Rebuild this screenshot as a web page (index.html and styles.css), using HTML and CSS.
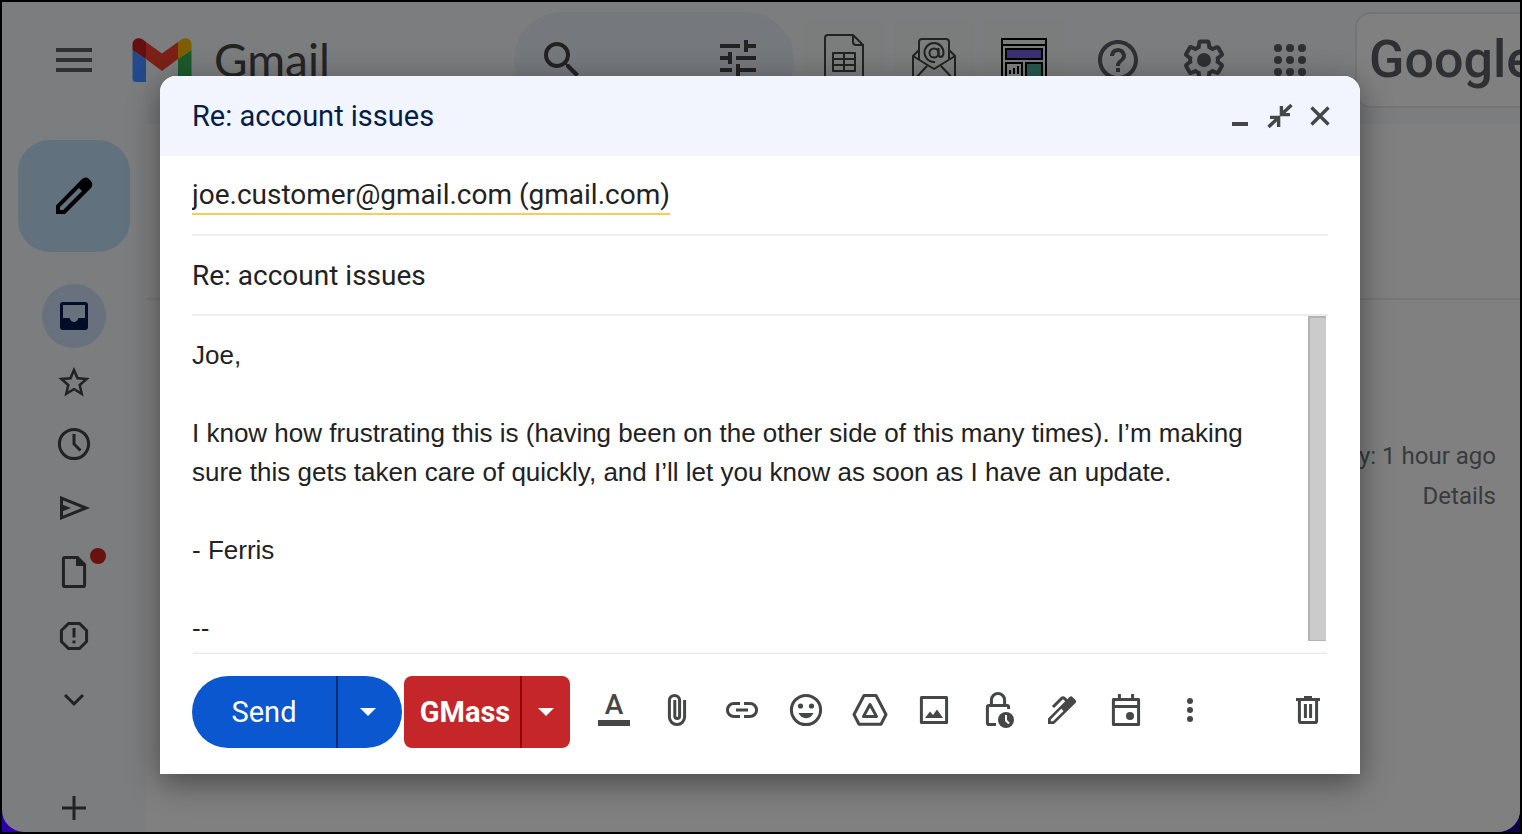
FILE: index.html
```html
<!DOCTYPE html>
<html lang="en">
<head>
<meta charset="utf-8">
<title>Gmail</title>
<link rel="stylesheet" href="styles.css">
</head>
<body>
<div class="desktop">
<div class="window">
  <header class="topbar">
    <button class="icon-btn" aria-label="Main menu"><svg width="48" height="48" viewBox="0 0 48 48"><path d="M6 12h36v4H6zM6 22h36v4H6zM6 32h36v4H6z"/></svg></button>
    <a class="brand" href="#">
      <svg width="60" height="44" viewBox="0 0 60 44" aria-hidden="true">
        <path fill="#224a8c" d="M.5 12L14 21V44H4.500Q.5 44 .5 40z"/>
        <path fill="#1b5a2c" d="M59.500 12L46 21V44H55.500Q59.500 44 59.500 40z"/>
        <path fill="#7c2018" d="M14 4L30 15.500L46 4V21L30 33L14 21z"/>
        <path fill="#641010" d="M.5 12V6.500C.5 1 6-1.500 10.500 1.300L14 4V21z"/>
        <path fill="#7d5d00" d="M59.500 12V6.500C59.500 1 54-1.500 49.500 1.300L46 4V21z"/>
      </svg>
      <span class="brand-name">Gmail</span>
    </a>
    <div class="search">
      <button class="icon-btn dark" aria-label="Search"><svg width="48" height="48" viewBox="0 0 24 24"><path d="M15.500 14h-.79l-.28-.27A6.471 6.471 0 0 0 16 9.500 6.500 6.500 0 1 0 9.500 16c1.610 0 3.090-.59 4.230-1.570l.27.28v.79l5 4.990L20.490 19l-4.990-5zm-6 0C7.010 14 5 11.990 5 9.500S7.010 5 9.500 5 14 7.010 14 9.500 11.990 14 9.500 14z"/></svg></button>
      <button class="icon-btn dark" aria-label="Search options"><svg width="48" height="48" viewBox="0 1 24 24"><path d="M3 17v2h6v-2H3zM3 5v2h10V5H3zm10 16v-2h8v-2h-8v-2h-2v6h2zM7 9v2H3v2h4v2h2V9H7zm14 4v-2H11v2h10zm-6-4h2V7h4V5h-4V3h-2v6z"/></svg></button>
    </div>
    <div class="extensions">
      <button class="ext" aria-label="Sheets campaign"><svg class="line" width="40" height="52" viewBox="0 0 40 52"><path d="M4 1h25l10 10v37q0 3-3 3H4q-3 0-3-3V4q0-3 3-3zM29 1v7q0 3 3 3h7M9 19h22v18H9zM9 25h22M9 31h22M20 19v18"/></svg></button>
      <button class="ext" aria-label="Mail campaign"><svg class="line" width="48" height="48" viewBox="0 0 48 48"><path d="M9 24V6q0-3 3-3h24q3 0 3 3v18M9 14l-6 6v24q0 2 2 2h38q2 0 2-2V20l-6-6M3 20l21 13L45 20M3 45l14-15M45 45L31 30"/><circle cx="24" cy="17" r="4.500"/><path d="M28.500 12v6q0 3 2.500 3 2.500-1 2.500-4a9.500 9.500 0 1 0-8.500 9"/></svg></button>
      <button class="ext" aria-label="Dashboard"><svg width="48" height="48" viewBox="0 0 48 48"><path fill="none" stroke="#000" stroke-width="2" d="M2 3h44v44H2zM2 9h44"/><path fill="#3c3070" stroke="#000" stroke-width="2" d="M6 13h36v10H6z"/><path fill="#808080" stroke="#000" stroke-width="2" d="M6 27h16v14H6z"/><path fill="#265852" stroke="#000" stroke-width="2" d="M26 27h16v14H26z"/><path stroke="#000" stroke-width="2" d="M10 38v-4M14 38v-6M18 38v-8"/></svg></button>
    </div>
    <div class="system">
      <button class="icon-btn" aria-label="Support"><svg width="48" height="48" viewBox="0 0 24 24"><path d="M11 18h2v-2h-2v2zm1-16C6.480 2 2 6.480 2 12s4.480 10 10 10 10-4.480 10-10S17.520 2 12 2zm0 18c-4.410 0-8-3.590-8-8s3.590-8 8-8 8 3.590 8 8-3.590 8-8 8zm0-14c-2.210 0-4 1.790-4 4h2c0-1.100.9-2 2-2s2 .9 2 2c0 2-3 1.750-3 5h2c0-2.250 3-2.500 3-5 0-2.210-1.790-4-4-4z"/></svg></button>
      <button class="icon-btn" aria-label="Settings"><svg width="48" height="48" viewBox="0 0 24 24"><path d="M13.850 22.250h-3.700c-.74 0-1.360-.54-1.450-1.270l-.27-1.890c-.27-.14-.53-.29-.79-.46l-1.800.72c-.7.260-1.470-.03-1.810-.65L2.200 15.530c-.35-.66-.2-1.440.36-1.880l1.530-1.190c-.01-.15-.02-.3-.02-.46 0-.15.010-.31.020-.46l-1.520-1.190c-.59-.45-.74-1.260-.37-1.880l1.850-3.190c.34-.62 1.110-.9 1.790-.63l1.810.73c.26-.17.52-.32.78-.46l.27-1.910c.09-.7.71-1.250 1.440-1.250h3.700c.74 0 1.360.54 1.450 1.270l.27 1.890c.27.14.53.29.79.46l1.800-.72c.71-.26 1.480.03 1.820.65l1.840 3.180c.36.66.2 1.440-.36 1.880l-1.520 1.190c.01.15.02.3.02.46s-.01.31-.02.46l1.520 1.190c.56.45.72 1.230.37 1.860l-1.860 3.220c-.34.62-1.110.9-1.800.63l-1.800-.72c-.26.17-.52.32-.78.460l-.27 1.910c-.1.680-.72 1.220-1.460 1.220zm-3.230-2h2.760l.37-2.550.53-.22c.44-.18.88-.44 1.340-.78l.45-.34 2.380.96 1.380-2.400-2.030-1.580.07-.56c.03-.26.060-.51.060-.78s-.03-.53-.06-.78l-.07-.56 2.030-1.580-1.390-2.400-2.390.96-.45-.35c-.42-.32-.87-.58-1.330-.77l-.52-.22-.37-2.550h-2.760l-.37 2.550-.53.210c-.44.190-.88.440-1.340.79l-.45.330-2.380-.95-1.390 2.390 2.030 1.580-.07.560c-.03.26-.06.53-.06.790s.02.53.06.78l.07.56-2.030 1.580 1.380 2.400 2.390-.96.450.35c.43.330.86.580 1.330.77l.53.220z"/><circle cx="12" cy="12" r="3.500"/></svg></button>
      <button class="icon-btn" aria-label="Google apps"><svg width="48" height="48" viewBox="0 0 48 48"><circle cx="12" cy="12" r="4"/><circle cx="24" cy="12" r="4"/><circle cx="36" cy="12" r="4"/><circle cx="12" cy="24" r="4"/><circle cx="24" cy="24" r="4"/><circle cx="36" cy="24" r="4"/><circle cx="12" cy="36" r="4"/><circle cx="24" cy="36" r="4"/><circle cx="36" cy="36" r="4"/></svg></button>
    </div>
    <div class="account">Google</div>
  </header>
  <div class="content">
    <aside class="sidebar">
      <button class="compose" aria-label="Compose"><svg width="40" height="40" viewBox="0 0 40 40"><path fill-rule="evenodd" d="M2 38V29.500L27.500 3.500Q31.500-.2 35 3L36.500 4.500Q40 8.500 36.500 12.500L11 38zM6 34H9.200L28 15 25 12 6 31z"/></svg></button>
      <nav class="nav">
        <a class="nav-item active" href="#" aria-label="Inbox"><svg width="40" height="40" viewBox="0 0 40 40"><path fill-rule="evenodd" d="M9 6H31Q34 6 34 9V31Q34 34 31 34H9Q6 34 6 31V9Q6 6 9 6zM9 9V22H15.500Q17 26 20 26T24.500 22H31V9z"/></svg></a>
        <a class="nav-item" href="#" aria-label="Starred"><svg width="40" height="40" viewBox="-0.800 -2.300 25.600 25.600"><path d="M22 9.240l-7.190-.62L12 2 9.190 8.630 2 9.240l5.460 4.730L5.820 21 12 17.270 18.180 21l-1.630-7.030L22 9.240zM12 15.400l-3.760 2.270 1-4.280-3.320-2.880 4.380-.38L12 6.100l1.710 4.040 4.380.38-3.320 2.880 1 4.280L12 15.400z"/></svg></a>
        <a class="nav-item" href="#" aria-label="Snoozed"><svg class="stroke" width="40" height="40" viewBox="0 0 40 40"><circle cx="20" cy="20" r="14.600"/><path d="M20 10V20L26.500 26.500"/></svg></a>
        <a class="nav-item" href="#" aria-label="Sent"><svg class="stroke" width="40" height="40" viewBox="0 0 40 40"><path d="M7.500 10.200L32 20 7.500 29.800z"/><path class="solid" d="M8 16.500L17 20 8 23.500z"/></svg></a>
        <a class="nav-item" href="#" aria-label="Drafts"><svg class="stroke" width="40" height="40" viewBox="0 0 40 40"><path d="M11 5.400H23.500L30.600 12.500V33Q30.600 34.600 29 34.600H11Q9.400 34.600 9.400 33V7Q9.400 5.400 11 5.400z"/><path class="solid" d="M22 5V14H31z"/></svg><span class="badge"></span></a>
        <a class="nav-item" href="#" aria-label="Spam"><svg class="stroke" width="40" height="40" viewBox="0 0 40 40"><path d="M14.500 7.400H25.500L32.600 14.500V25.500L25.500 32.600H14.500L7.400 25.500V14.500z"/><path d="M20 12V21.500M20 24.500V27.300"/></svg></a>
        <a class="nav-item" href="#" aria-label="More"><svg class="stroke" width="40" height="40" viewBox="0 0 40 40"><path d="M11 15L20 24 29 15"/></svg></a>
      </nav>
      <button class="add" aria-label="New label"><svg class="stroke" width="40" height="40" viewBox="0 0 40 40"><path d="M20 8V32M8 20H32"/></svg></button>
    </aside>
    <main class="mail">
      <div class="mail-head"></div>
      <footer class="activity">
        <p>Last account activity: 1 hour ago</p>
        <a href="#">Details</a>
      </footer>
    </main>
  </div>
</div>
</div>

<div class="overlay">
<form class="dialog" role="dialog" aria-labelledby="dialog-title">
  <header class="dialog-head">
    <h1 id="dialog-title">Re: account issues</h1>
    <div class="controls">
      <button type="button" aria-label="Minimize"><svg width="40" height="40" viewBox="0 0 40 40"><path d="M12 26H28V30H12z"/></svg></button>
      <button type="button" aria-label="Exit full screen"><svg class="stroke" width="40" height="40" viewBox="0 0 40 40"><path d="M21.400 10V18.600H30M31.500 9L22 18M18.600 31V21.400H10M8.500 31L18 22"/></svg></button>
      <button type="button" aria-label="Close"><svg class="stroke" width="40" height="40" viewBox="0 0 40 40"><path d="M11.500 11.500L28.500 28.500M28.500 11.500L11.500 28.500"/></svg></button>
    </div>
  </header>
  <div class="dialog-main">
    <div class="field"><input class="recipient" type="text" aria-label="To" value="joe.customer@gmail.com (gmail.com)"></div>
    <div class="field"><input class="subject" type="text" aria-label="Subject" value="Re: account issues"></div>
    <div class="message">
      <textarea aria-label="Message body" rows="8" spellcheck="false">Joe,

I know how frustrating this is (having been on the other side of this many times). I’m making sure this gets taken care of quickly, and I’ll let you know as soon as I have an update.

- Ferris

--</textarea>
      <div class="scrollbar"></div>
    </div>
    <div class="toolbar">
      <div class="split send">
        <button type="button" class="split-main">Send</button>
        <button type="button" class="split-more" aria-label="More send options"><svg width="16" height="8" viewBox="0 0 16 8"><path d="M0 0H16L8 8z"/></svg></button>
      </div>
      <div class="split gmass">
        <button type="button" class="split-main">GMass</button>
        <button type="button" class="split-more" aria-label="GMass settings"><svg width="16" height="8" viewBox="0 0 16 8"><path d="M0 0H16L8 8z"/></svg></button>
      </div>
      <div class="tools">
        <button type="button" aria-label="Formatting options"><svg width="40" height="40" viewBox="0 0 40 40"><text class="letter" x="20" y="24" text-anchor="middle">A</text><path d="M4 30H36V36H4z"/></svg></button>
        <button type="button" aria-label="Attach files"><svg class="stroke" width="40" height="40" viewBox="0 0 40 40"><path d="M26.600 10V27A7.600 7.600 0 0 1 11.400 27V10.500A5.100 5.100 0 0 1 21.600 10.500V26A2.400 2.400 0 0 1 16.800 26V10"/></svg></button>
        <button type="button" aria-label="Insert link"><svg class="stroke" width="40" height="40" viewBox="0 0 40 40"><path d="M18 13.400H12A6.600 6.600 0 0 0 12 26.600H18M22 13.400H28A6.600 6.600 0 0 1 28 26.600H22M14 20H26"/></svg></button>
        <button type="button" aria-label="Insert emoji"><svg class="stroke" width="40" height="40" viewBox="0 0 40 40"><circle cx="20" cy="20" r="14.600"/><circle class="solid" cx="14.500" cy="16" r="2.600"/><circle class="solid" cx="25.500" cy="16" r="2.600"/><path class="solid" d="M12.500 23H27.500Q25 28.200 20 28.200T12.500 23z"/></svg></button>
        <button type="button" aria-label="Insert files using Drive"><svg class="stroke round" width="40" height="40" viewBox="0 0 40 40"><path d="M14 5.500H26L36 24.500 31 34.300H9L4 24.500z"/><path d="M20 14.500L26.500 26.400H13.500z"/></svg></button>
        <button type="button" aria-label="Insert photo"><svg class="stroke round" width="40" height="40" viewBox="0 0 40 40"><path d="M7.400 7.400H32.600V32.600H7.400z"/><path class="solid" d="M11 28L16 21.500 19 25 23 19.500 29 28z"/></svg></button>
        <button type="button" aria-label="Confidential mode"><svg class="stroke" width="40" height="40" viewBox="0 0 40 40"><path d="M18 34.600H11Q9.400 34.600 9.400 33V17Q9.400 15.400 11 15.400H29Q30.600 15.400 30.600 17V19M13.400 15V10A6.600 6.600 0 0 1 26.600 10V15"/><circle class="solid" cx="28" cy="30" r="8"/><path class="hand" d="M28 25V30.500L31 33.500"/></svg></button>
        <button type="button" aria-label="Insert signature"><svg width="40" height="40" viewBox="0 0 40 40"><path fill-rule="evenodd" d="M6 34V28.500L27.500 7Q29 5.500 30.500 7L33.500 10Q35 11.500 33.500 13L12 34zM8.800 31.300H11L21.500 21 19.200 18.800 8.800 29.500z"/><path class="clip" d="M11 17L19.500 8.500Q21 7 22.500 8.500L25 11"/></svg></button>
        <button type="button" aria-label="Set up a meeting"><svg class="stroke round" width="40" height="40" viewBox="0 0 40 40"><path d="M7.400 9.600H32.600V34.600H7.400zM7.400 16.400H32.600M13.400 4V10M26.600 4V10"/><circle class="solid" cx="24" cy="26" r="4"/></svg></button>
        <button type="button" aria-label="More options"><svg width="40" height="40" viewBox="0 0 40 40"><circle cx="20" cy="11" r="3"/><circle cx="20" cy="20" r="3"/><circle cx="20" cy="29" r="3"/></svg></button>
      </div>
      <button type="button" class="discard" aria-label="Discard draft"><svg class="stroke" width="40" height="40" viewBox="0 0 40 40"><path d="M8 9.400H32M16 7.400H24M11.400 10V31Q11.400 32.600 13 32.600H27Q28.600 32.600 28.600 31V10M17.400 14V28M22.600 14V28"/></svg></button>
    </div>
  </div>
</form>
</div>
</body>
</html>
```
FILE: styles.css
```css
* { box-sizing: border-box; }
body { margin: 0; font-family: Roboto, "Noto Sans", sans-serif; }
h1, p { margin: 0; font-weight: 400; }
button { border: 0; padding: 0; background: none; font: inherit; color: inherit; cursor: pointer; }
a { color: inherit; text-decoration: none; }
svg { display: block; fill: currentColor; }
input, textarea { border: 0; padding: 0; background: none; outline: none; font: inherit; color: inherit; }

.stroke { fill: none; stroke: currentColor; stroke-width: 3; }
.stroke.round { stroke-linejoin: round; }
.stroke .solid { fill: currentColor; stroke: none; }
.stroke .hand { stroke: #fff; stroke-width: 2; }
.line { fill: none; stroke: currentColor; stroke-width: 2; stroke-linejoin: round; }
.clip { fill: none; stroke: currentColor; stroke-width: 3; }
.controls .stroke { stroke-width: 3.4; }
.letter { font-family: Roboto, sans-serif; font-size: 28px; font-weight: 500; }

.desktop { height: 100vh; border: 2px solid #000; background: linear-gradient(90deg, #2a00a8, #0f0048); overflow: hidden; }
.window { height: 100%; display: flex; flex-direction: column; overflow: hidden; border-radius: 0 0 22px 22px; background: #7c7d7f; color: #2f3033; }

.topbar { flex: none; display: flex; align-items: center; height: 122px; padding: 0 0 6px 48px; }
.icon-btn { display: flex; justify-content: center; flex: none; }
.dark { color: #222; }
.brand { display: flex; align-items: center; gap: 22px; flex: 0 0 382px; margin-left: 34px; }
.brand-name { font-family: Lato, sans-serif; font-size: 46px; line-height: 48px; color: #242424; }
.search { flex: 1; display: flex; align-items: center; justify-content: space-between; height: 96px; padding: 0 32px 0 24px; border-radius: 48px; background: #75787d; }
.extensions { display: flex; gap: 10px; margin-left: 10px; }
.ext { display: flex; align-items: center; justify-content: center; width: 80px; height: 80px; border-radius: 8px; background: #7b7d7c; color: #222; }
.system { display: flex; gap: 38px; margin-left: 30px; }
.account { flex: 0 0 165px; height: 96px; margin-left: 41px; padding-left: 12px; overflow: hidden; border: 2px solid #747577; border-right: 0; border-radius: 16px 0 0 16px; background: #808080; font-size: 52px; font-weight: 500; line-height: 92px; }

.content { flex: 1; display: flex; min-height: 0; }
.sidebar { flex: 0 0 144px; display: flex; flex-direction: column; align-items: center; padding-top: 16px; color: #222; }
.compose { display: flex; align-items: center; justify-content: center; flex: none; width: 112px; height: 112px; border-radius: 32px; background: #61727e; color: #000; }
.nav { margin-top: 32px; }
.nav-item { position: relative; display: flex; align-items: center; justify-content: center; width: 64px; height: 64px; border-radius: 50%; }
.nav-item.active { background: #69707e; color: #000d26; }
.badge { position: absolute; top: 8px; right: 0; width: 16px; height: 16px; border-radius: 50%; background: #6a1210; }
.add { display: flex; align-items: center; flex: none; height: 48px; margin-top: 52px; }
.mail { flex: 1; background: #808080; }
.mail-head { height: 176px; border-bottom: 2px solid #767777; }
.activity { padding: 136px 24px 0; text-align: right; font-size: 24px; line-height: 40px; color: #393a3d; }

.overlay { position: absolute; inset: 0; padding: 76px 162px 60px 160px; }
.dialog { overflow: hidden; border-radius: 16px 16px 0 0; background: #fff; color: #222; box-shadow: 0 8px 32px rgba(0, 0, 0, .45); }
.dialog-head { display: flex; align-items: center; justify-content: space-between; height: 80px; padding: 0 20px 0 32px; background: #f2f5fd; color: #444746; }
.dialog-head h1 { font-size: 29px; line-height: 40px; color: #041e49; }
.controls { display: flex; }
.dialog-main { padding: 0 32px; }
.field { display: flex; align-items: center; height: 80px; border-bottom: 2px solid #eaeef2; font-size: 28px; }
.recipient { field-sizing: content; height: 40px; border-bottom: 2px solid #fccb55; }
.subject { flex: 1; height: 40px; }
.message { display: flex; height: 338px; }
.message textarea { flex: 1; padding: 20px 32px 0 0; resize: none; overflow: hidden; font-family: "Liberation Sans", Arial, sans-serif; font-size: 26px; line-height: 39px; }
.scrollbar { width: 18px; height: 325px; margin-right: 2px; border: solid #b3b3b3; border-width: 2px 0 1px 2px; background: #cbcbcb; }
.toolbar { display: flex; align-items: center; height: 120px; padding-bottom: 4px; box-shadow: 0 -2px 2px -1px rgba(0, 0, 0, .12); color: #444746; }
.split { display: flex; flex: none; height: 72px; overflow: hidden; color: #fff; }
.split-more { display: flex; align-items: center; justify-content: center; }
.send { border-radius: 36px; background: #0b57d0; font-size: 29px; }
.send .split-main { width: 144px; }
.send .split-more { width: 66px; padding-right: 4px; border-left: 2px solid #062e6f; }
.gmass { margin-left: 2px; border-radius: 8px; background: #c5262a; font-size: 29px; font-weight: 700; }
.gmass .split-main { width: 116px; padding-left: 6px; }
.gmass .split-more { width: 50px; border-left: 2px solid #990000; }
.tools { display: flex; margin: 0 0 4px 12px; }
.tools button { display: flex; justify-content: center; width: 64px; }
.discard { margin: 0 0 4px auto; }
```
